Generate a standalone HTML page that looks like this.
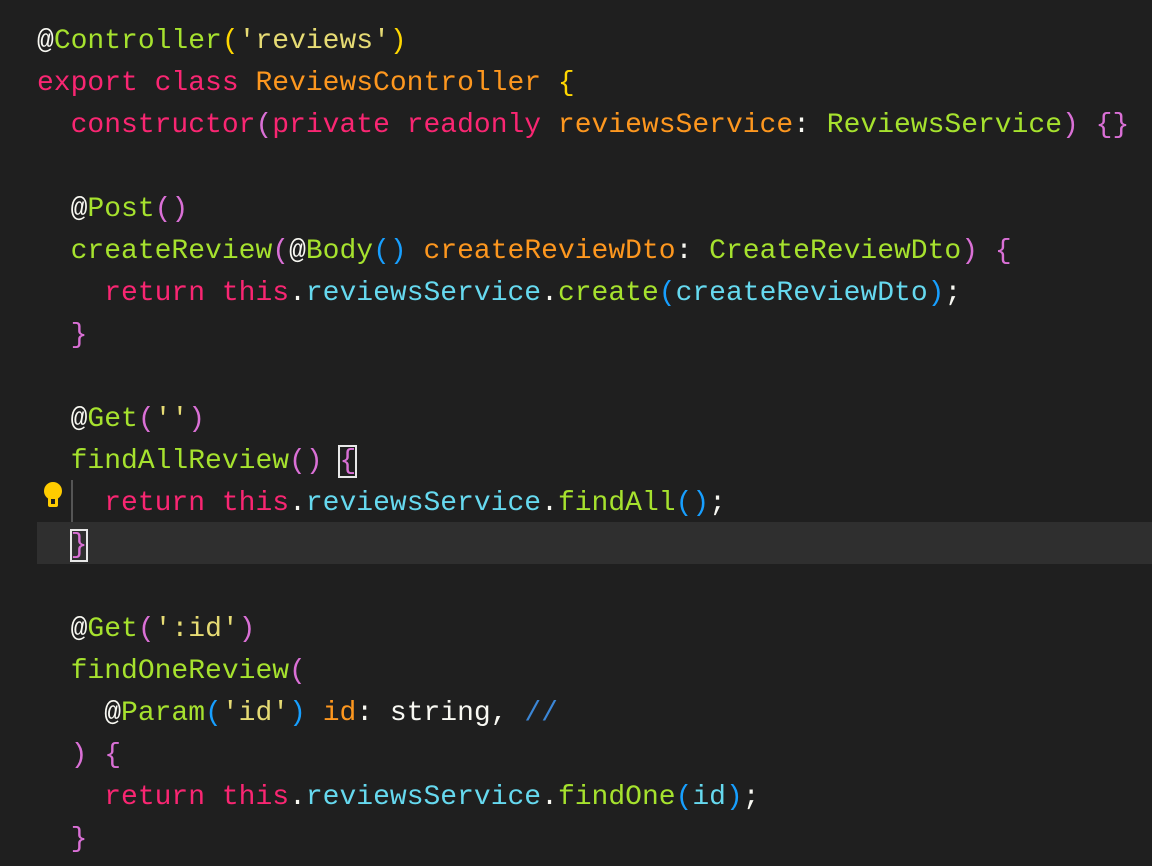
<!DOCTYPE html><html><head><style>
body{margin:0;width:1152px;height:866px;background:#1f1f1f;overflow:hidden;position:relative}
pre{margin:0;position:absolute;left:37px;top:21px;font:28px/42px "Liberation Mono",monospace;color:#f8f8f2;white-space:pre}
.g{color:#a6e22e}.k{color:#f92672}.o{color:#fd971f}.s{color:#e6db74}.y{color:#ffd700}.m{color:#da70d6}.c{color:#66d9ef}.b{color:#179fff}.cm{color:#3b86d6}
.box{outline:2px solid #e8e8e8;outline-offset:-1px}
#hl{position:absolute;left:37px;top:522px;width:1115px;height:42px;background:#2f2f2f}
#guide{position:absolute;left:71px;top:480px;width:2px;height:42px;background:#555}
</style></head><body>
<div id="hl"></div><div id="guide"></div>
<svg style="position:absolute;left:41px;top:481px" width="24" height="30" viewBox="0 0 24 30"><circle cx="12" cy="10" r="9" fill="#ffcc00"/><rect x="7" y="16" width="10" height="10" rx="2" fill="#ffcc00"/><rect x="10" y="18" width="4" height="5" fill="#1f1f1f"/></svg>
<pre>@<span class="g">Controller</span><span class="y">(</span><span class="s">'reviews'</span><span class="y">)</span>
<span class="k">export class </span><span class="o">ReviewsController </span><span class="y">{</span>
  <span class="k">constructor</span><span class="m">(</span><span class="k">private readonly </span><span class="o">reviewsService</span>: <span class="g">ReviewsService</span><span class="m">) {}</span>

  @<span class="g">Post</span><span class="m">()</span>
  <span class="g">createReview</span><span class="m">(</span>@<span class="g">Body</span><span class="b">()</span> <span class="o">createReviewDto</span>: <span class="g">CreateReviewDto</span><span class="m">) {</span>
    <span class="k">return this</span>.<span class="c">reviewsService</span>.<span class="g">create</span><span class="b">(</span><span class="c">createReviewDto</span><span class="b">)</span>;
  <span class="m">}</span>

  @<span class="g">Get</span><span class="m">(</span><span class="s">''</span><span class="m">)</span>
  <span class="g">findAllReview</span><span class="m">()</span> <span class="m box">{</span>
    <span class="k">return this</span>.<span class="c">reviewsService</span>.<span class="g">findAll</span><span class="b">()</span>;
  <span class="m box">}</span>

  @<span class="g">Get</span><span class="m">(</span><span class="s">':id'</span><span class="m">)</span>
  <span class="g">findOneReview</span><span class="m">(</span>
    @<span class="g">Param</span><span class="b">(</span><span class="s">'id'</span><span class="b">)</span> <span class="o">id</span>: string, <span class="cm">//</span>
  <span class="m">) {</span>
    <span class="k">return this</span>.<span class="c">reviewsService</span>.<span class="g">findOne</span><span class="b">(</span><span class="c">id</span><span class="b">)</span>;
  <span class="m">}</span></pre>
</body></html>
